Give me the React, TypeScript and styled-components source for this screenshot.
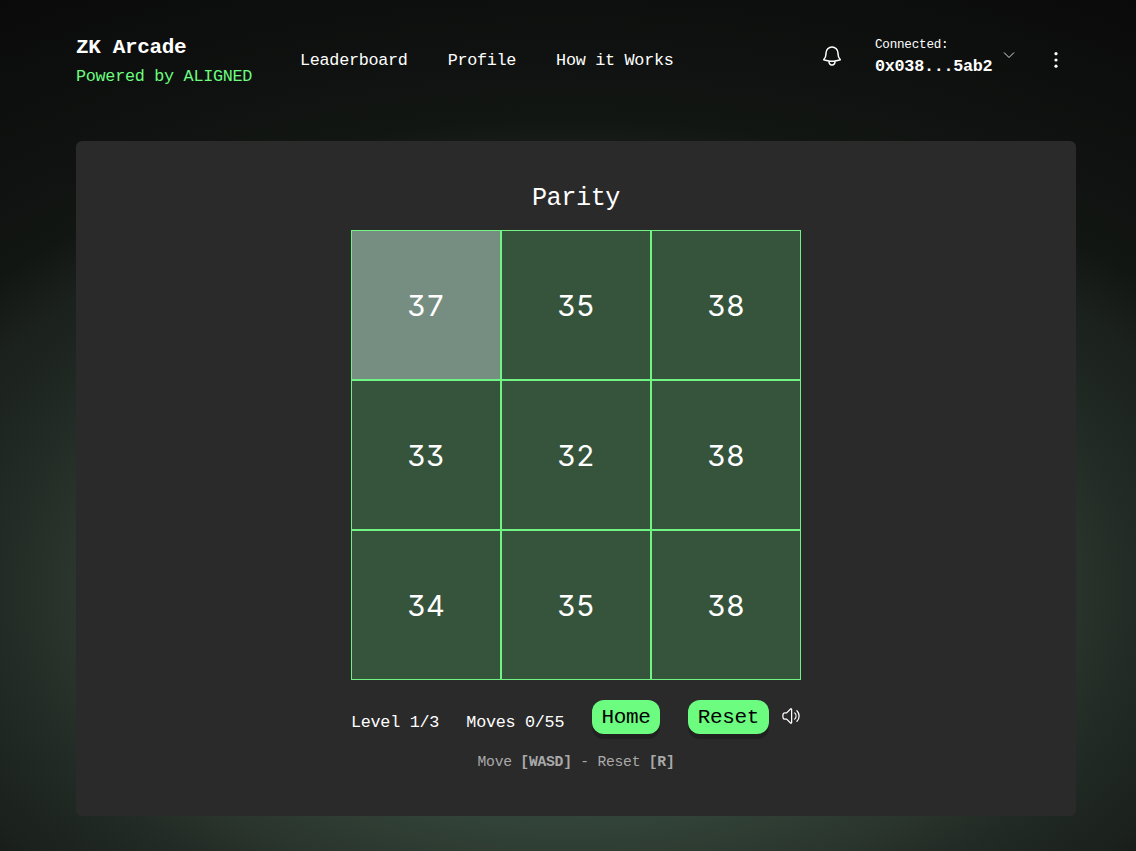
import React from "react";
import styled, { createGlobalStyle, css } from "styled-components";
import { HiOutlineBell, HiOutlineSpeakerWave } from "react-icons/hi2";

const GlobalStyle = createGlobalStyle`
  * { box-sizing: border-box; }
  body { margin: 0; background: #0a0a0a; }
`;

const mono = (size: number) => css`
  font-family: "Liberation Mono", monospace;
  font-size: ${size * 1.05}px;
  letter-spacing: -0.0171em;
`;

const Page = styled.div`
  height: 851px;
  overflow: hidden;
  color: #fff;
  background:
    radial-gradient(ellipse 800px 496px at 568px 590px, #42604f 0%, #32443a 46%, #2f3d33 53%, #2a352d 62%, #222b25 71%, #1b211d 85%, #121613 95%, #101311 105%, #0a0a0a 138%);
`;

const Header = styled.header`
  display: flex;
  align-items: flex-start;
  height: 141px;
  padding: 34px 73px 0 76px;
`;

const Brand = styled.div`
  width: 224px;
`;

const BrandName = styled.div`
  ${mono(20)}
  font-weight: 700;
  line-height: 28px;
`;

const Powered = styled.div`
  ${mono(16)}
  line-height: 24px;
  margin-top: 3px;
  color: #6bfc80;
`;

const Nav = styled.nav`
  display: flex;
  gap: 40px;
  padding-top: 15px;
`;

const NavLink = styled.a`
  ${mono(16)}
  line-height: 24px;
  white-space: nowrap;
`;

const Tools = styled.div`
  display: flex;
  align-items: flex-start;
  margin-left: auto;
`;

const Bell = styled(HiOutlineBell)`
  width: 24px;
  height: 24px;
  margin: 10px 31px 0 0;
`;

const Wallet = styled.div`
  width: 118px;
  padding-top: 1px;
`;

const WalletLabel = styled.div`
  ${mono(12)}
  line-height: 20px;
`;

const WalletAddress = styled.div`
  ${mono(16)}
  font-weight: 700;
  line-height: 24px;
`;

const Chevron = styled.svg`
  width: 12px;
  height: 8px;
  margin: 17px 34px 0 10px;
`;

const Dots = styled.svg`
  width: 14px;
  height: 24px;
  margin-top: 14px;
`;

const Panel = styled.main`
  display: flex;
  flex-direction: column;
  align-items: center;
  width: 1000px;
  height: 675px;
  margin-left: 76px;
  padding-top: 42px;
  border-radius: 6px;
  background: #2a2a2a;
`;

const Title = styled.h1`
  ${mono(24)}
  margin: 0 0 15px;
  font-weight: 400;
  line-height: 32px;
`;

const Board = styled.div`
  display: grid;
  grid-template-columns: repeat(3, 150px);
  grid-auto-rows: 150px;
`;

const Cell = styled.div<{ $active: boolean }>`
  display: flex;
  align-items: center;
  justify-content: center;
  border: 1px solid #70f585;
  background: ${(p) => (p.$active ? "#768e82" : "#36543b")};
  font-family: Inter, sans-serif;
  font-feature-settings: "cv09", "tnum";
  font-size: 29px;
`;

const Controls = styled.div`
  display: flex;
  justify-content: space-between;
  width: 450px;
  height: 34px;
  margin-top: 20px;
`;

const Stat = styled.span`
  ${mono(16)}
  line-height: 24px;
  padding-top: 11px;
  white-space: nowrap;
`;

const Button = styled.button`
  ${mono(20)}
  height: 34px;
  padding: 2px 10px 0;
  border: 0;
  border-radius: 12px;
  color: #000;
  background: #6bfc80;
  box-shadow: 0 5px 0 #202020;
  line-height: 32px;
`;

const ResetGroup = styled.div`
  display: flex;
  gap: 12px;
`;

const Speaker = styled(HiOutlineSpeakerWave)`
  width: 20px;
  height: 20px;
  margin-top: 6px;
`;

const Hint = styled.p`
  ${mono(14)}
  margin: 18px 0 0;
  line-height: 20px;
  color: #a9a9a9;
`;

const cells = [37, 35, 38, 33, 32, 38, 34, 35, 38];

export default function App() {
  return (
    <Page>
      <GlobalStyle />
      <Header>
        <Brand>
          <BrandName>ZK Arcade</BrandName>
          <Powered>Powered by ALIGNED</Powered>
        </Brand>
        <Nav>
          <NavLink>Leaderboard</NavLink>
          <NavLink>Profile</NavLink>
          <NavLink>How it Works</NavLink>
        </Nav>
        <Tools>
          <Bell />
          <Wallet>
            <WalletLabel>Connected:</WalletLabel>
            <WalletAddress>0x038...5ab2</WalletAddress>
          </Wallet>
          <Chevron viewBox="0 0 12 8" fill="none" stroke="#ddd" strokeWidth="1">
            <path d="M1 1.5 6 6.5 11 1.5" />
          </Chevron>
          <Dots viewBox="0 0 14 24" fill="#fff">
            <circle cx="7" cy="5.7" r="1.6" />
            <circle cx="7" cy="12" r="1.6" />
            <circle cx="7" cy="18.2" r="1.6" />
          </Dots>
        </Tools>
      </Header>
      <Panel>
        <Title>Parity</Title>
        <Board>
          {cells.map((n, i) => (
            <Cell key={i} $active={i === 0}>{n}</Cell>
          ))}
        </Board>
        <Controls>
          <Stat>Level 1/3</Stat>
          <Stat>Moves 0/55</Stat>
          <Button>Home</Button>
          <ResetGroup>
            <Button>Reset</Button>
            <Speaker />
          </ResetGroup>
        </Controls>
        <Hint>
          Move <b>[WASD]</b> - Reset <b>[R]</b>
        </Hint>
      </Panel>
    </Page>
  );
}
